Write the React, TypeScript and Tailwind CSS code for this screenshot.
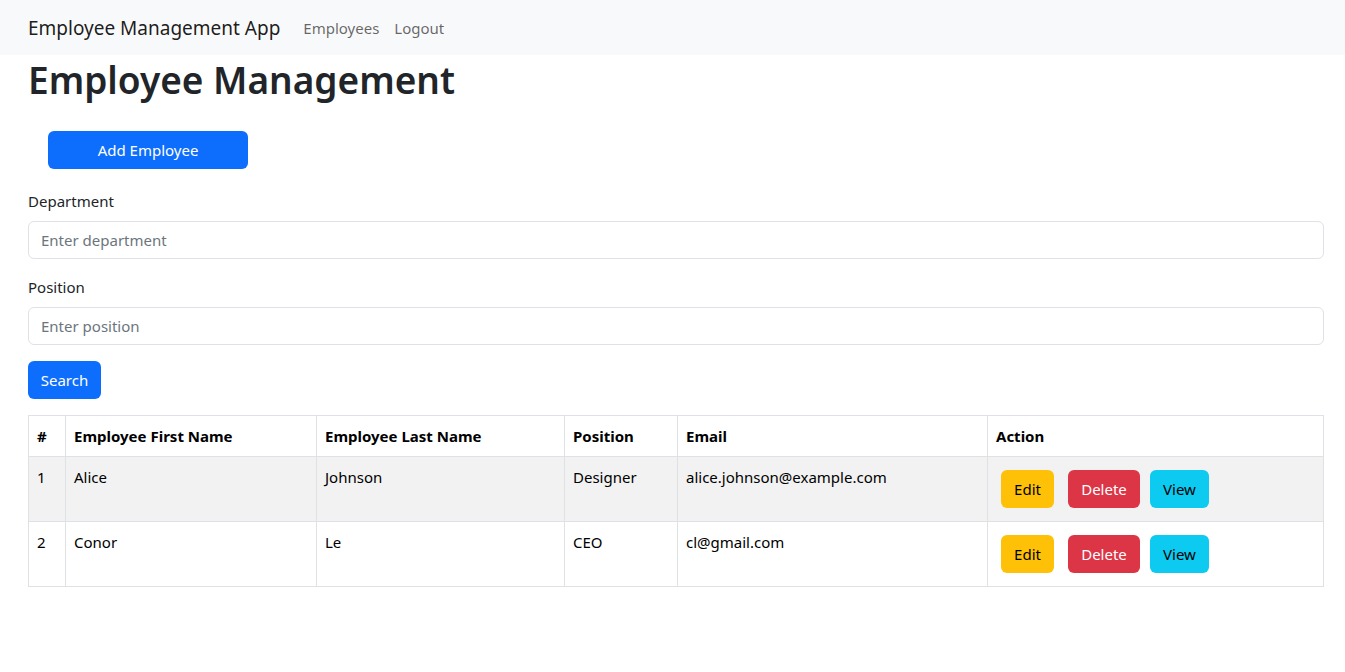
import React from 'react';

const employees = [
  { id: 1, first: 'Alice', last: 'Johnson', position: 'Designer', email: 'alice.johnson@example.com' },
  { id: 2, first: 'Conor', last: 'Le', position: 'CEO', email: 'cl@gmail.com' },
];

function Navbar() {
  return (
    <nav className="h-[55px] bg-[#f8f9fa] flex items-center px-[28px]">
      <span className="text-[19px] text-black/90 mr-[23px]">Employee Management App</span>
      <a className="text-[15px] text-black/60 mr-[15px]">Employees</a>
      <a className="text-[15px] text-black/60">Logout</a>
    </nav>
  );
}

export default function App() {
  return (
    <div className="min-h-screen bg-white text-[#212529] text-[15px] leading-[24px]" style={{ fontFamily: '"Segoe UI", "Noto Sans", sans-serif' }}>
      <Navbar />
      <main className="pl-[28px] w-[1324px]">
        <h1 className="text-[37px] leading-[48px] font-semibold mt-[1px] mb-0">Employee Management</h1>

        <button className="mt-[27px] ml-[20px] w-[200px] h-[38px] rounded-[6px] bg-[#0d6efd] text-white">
          Add Employee
        </button>

        <div className="mt-[20px]">
          <label className="block mb-[8px]">Department</label>
          <input
            className="w-full h-[38px] border border-[#dee2e6] rounded-[6px] px-[12px] placeholder:text-[#6c757d] outline-none"
            placeholder="Enter department"
          />
        </div>

        <div className="mt-[16px]">
          <label className="block mb-[8px]">Position</label>
          <input
            className="w-full h-[38px] border border-[#dee2e6] rounded-[6px] px-[12px] placeholder:text-[#6c757d] outline-none"
            placeholder="Enter position"
          />
        </div>

        <button className="mt-[16px] h-[38px] w-[73px] rounded-[6px] bg-[#0d6efd] text-white">Search</button>

        <table className="mt-[16px] w-full border-collapse border border-[#dee2e6] text-left">
          <thead>
            <tr className="h-[41px]">
              <th className="w-[37px] border border-[#dee2e6] px-[8px] font-bold text-black">#</th>
              <th className="w-[251px] border border-[#dee2e6] px-[8px] font-bold text-black">Employee First Name</th>
              <th className="w-[248px] border border-[#dee2e6] px-[8px] font-bold text-black">Employee Last Name</th>
              <th className="w-[113px] border border-[#dee2e6] px-[8px] font-bold text-black">Position</th>
              <th className="w-[310px] border border-[#dee2e6] px-[8px] font-bold text-black">Email</th>
              <th className="border border-[#dee2e6] px-[8px] font-bold text-black">Action</th>
            </tr>
          </thead>
          <tbody>
            {employees.map((e, i) => (
              <tr key={e.id} className={i % 2 === 0 ? 'bg-[#f2f2f2]' : 'bg-white'}>
                <td className="border border-[#dee2e6] p-[8px] align-top text-black">{e.id}</td>
                <td className="border border-[#dee2e6] p-[8px] align-top text-black">{e.first}</td>
                <td className="border border-[#dee2e6] p-[8px] align-top text-black">{e.last}</td>
                <td className="border border-[#dee2e6] p-[8px] align-top text-black">{e.position}</td>
                <td className="border border-[#dee2e6] p-[8px] align-top text-black">{e.email}</td>
                <td className="border border-[#dee2e6] p-[8px] align-top">
                  <div className="flex mt-[5px] mb-[5px] ml-[5px]">
                    <button className="h-[38px] w-[53px] rounded-[6px] bg-[#ffc107] text-black">Edit</button>
                    <button className="h-[38px] w-[72px] ml-[14px] rounded-[6px] bg-[#dc3545] text-white">Delete</button>
                    <button className="h-[38px] w-[59px] ml-[10px] rounded-[6px] bg-[#0dcaf0] text-black">View</button>
                  </div>
                </td>
              </tr>
            ))}
          </tbody>
        </table>
      </main>
    </div>
  );
}
